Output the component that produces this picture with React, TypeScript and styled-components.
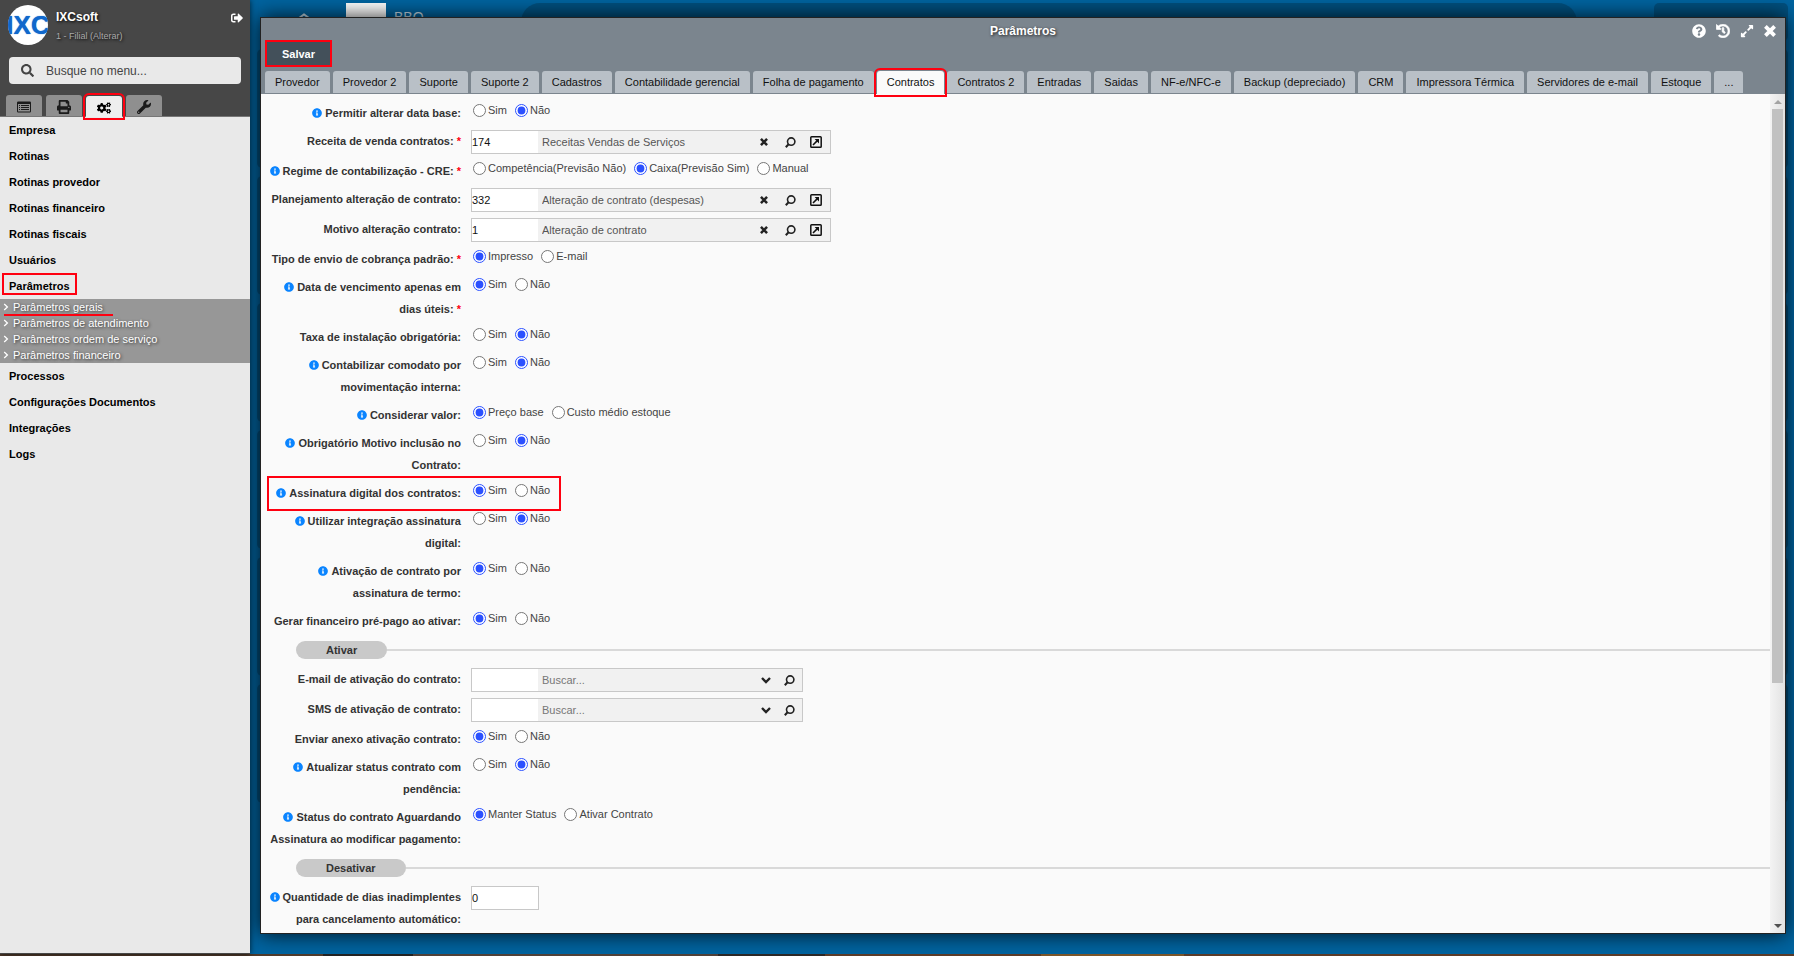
import React from "react";
import styled, { createGlobalStyle, css } from "styled-components";
import {
  FaCogs,
  FaExpandAlt,
  FaHistory,
  FaInfoCircle,
  FaPrint,
  FaQuestionCircle,
  FaSearch,
  FaSignOutAlt,
  FaWrench,
} from "react-icons/fa";

const GlobalStyle = createGlobalStyle`
  *, *::before, *::after { box-sizing: border-box; }
  body {
    margin: 0;
    font: 11px "Liberation Sans", Arial, sans-serif;
    color: #333;
    overflow: hidden;
  }
  button, input { font: inherit; color: inherit; }
  button { border: 0; padding: 0; background: none; cursor: pointer; }
  a { color: inherit; text-decoration: none; }
  ul { list-style: none; margin: 0; padding: 0; }
`;

const highlight = css`
  outline: 2px solid #ff0010;
  outline-offset: 1px;
  z-index: 2;
`;

const Page = styled.div`
  display: grid;
  grid-template: minmax(0, 1fr) 2px / 250px minmax(0, 1fr);
  height: 100vh;
`;

const Dock = styled.div`
  grid-column: 1 / -1;
  background: linear-gradient(90deg, #4f3a2b 0 18%, #222 18% 23%, #4f4038 23% 40%, #2c2725 40% 46%, #5b3b28 46% 58%, #7a5529 58% 66%, #5b3b28 66%);
`;

/* ---------- sidebar ---------- */

const Sidebar = styled.aside`
  display: flex;
  flex-direction: column;
  background: #e9e9e9;
  border-bottom: 1px solid #474747;
  box-shadow: 0 0 6px rgba(0, 0, 0, 0.7);
  z-index: 1;
`;

const SideHeader = styled.header`
  background: #474747;
  border-bottom: 1px solid #777;
`;

const Account = styled.div`
  display: flex;
  gap: 8px;
  height: 57px;
  padding: 5px 7px 0 8px;
  color: #fff;
  text-shadow: 1px 1px 3px #000;
`;

const Logo = styled.div`
  display: flex;
  align-items: center;
  justify-content: center;
  width: 40px;
  height: 40px;
  overflow: hidden;
  border-radius: 50%;
  background: #fff;
  color: #1068cc;
  font-size: 26px;
  font-weight: bold;
  text-shadow: 0 0 1px #1068cc;
`;

const AccountText = styled.div`
  flex: 1;
  padding-top: 5px;
`;

const AccountName = styled.div`
  font-size: 12px;
  line-height: 14px;
  font-weight: bold;
`;

const Branch = styled.a`
  display: block;
  margin-top: 7px;
  font-size: 9px;
  line-height: 10px;
  color: #aaa;
`;

const LogoutButton = styled.button`
  align-self: flex-start;
  margin-top: 7px;
  font-size: 12px;
  line-height: 1;
`;

const SearchBox = styled.label`
  display: flex;
  align-items: center;
  gap: 12px;
  height: 27px;
  margin: 0 9px 11px;
  padding: 0 12px;
  border-radius: 4px;
  background: #e9e9e9;
  color: #444;
  font-size: 13px;
`;

const SearchInput = styled.input`
  flex: 1;
  min-width: 0;
  padding: 0;
  border: 0;
  outline: 0;
  background: none;
  font-size: 12px;
  &::placeholder { color: #444; opacity: 1; }
`;

const SideTabs = styled.div`
  display: flex;
  gap: 4px;
  height: 21px;
  padding-left: 6px;
`;

const SideTab = styled.button<{ $active?: boolean }>`
  display: flex;
  align-items: center;
  justify-content: center;
  width: 36px;
  height: 21px;
  padding-top: 2px;
  border-radius: 3px 3px 0 0;
  background: #8f8f8f;
  color: #1b1b1b;
  font-size: 14px;
  ${(p) => p.$active && css`
    margin-top: 1px;
    background: #eee;
    color: #000;
    ${highlight}
  `}
`;

const MenuItem = styled.li`
  height: 26px;
  padding-left: 2px;
`;

const MenuLink = styled.a<{ $marked?: boolean }>`
  display: inline-block;
  padding: 4px 5px 0;
  border: 2px solid ${(p) => (p.$marked ? "#ff0010" : "transparent")};
  line-height: 14px;
  font-weight: bold;
  color: #000;
`;

const SubMenu = styled.ul`
  background: #979797;
  color: #fff;
  text-shadow: 1px 1px 3px #333;
`;

const SubLink = styled.a<{ $marked?: boolean }>`
  position: relative;
  display: flex;
  align-items: center;
  gap: 4px;
  height: 16px;
  padding-left: 3px;
  ${(p) => p.$marked && css`
    &::after {
      content: "";
      position: absolute;
      left: 4px;
      bottom: -1px;
      width: 109px;
      height: 2px;
      background: #ff0010;
    }
  `}
`;

/* ---------- desktop ---------- */

const Desktop = styled.main`
  position: relative;
  background: #0064a0;
  overflow: hidden;
`;

const Backdrop = styled.div`
  display: flex;
  flex-direction: column;
  gap: 8px;
  padding: 3px 6px 0 7px;
`;

const BackdropBar = styled.div`
  display: flex;
  height: 38px;
  padding-left: 41px;
  color: rgba(255, 255, 255, 0.8);
`;

const BackdropArrow = styled.div`
  width: 48px;
  padding-top: 10px;
`;

const BackdropPicture = styled.div`
  width: 40px;
  height: 40px;
  background: #fff;
`;

const BackdropName = styled.div`
  width: 135px;
  padding: 6px 0 0 8px;
  font-size: 14px;
  line-height: 16px;
`;

const BackdropSearch = styled.div`
  flex: 1;
  margin-right: 77px;
  border-radius: 19px;
  background: #00507f;
`;

const BackdropUser = styled.div`
  width: 134px;
  border-radius: 5px;
  background: #00507f;
`;

const BackdropCard = styled.div`
  height: 119px;
  border-radius: 5px;
  background: #00507f;
`;

/* ---------- window ---------- */

const Window = styled.section`
  position: absolute;
  inset: 17px 8px 20px 10px;
  display: flex;
  flex-direction: column;
  border: 1px solid #222;
  background: #fafafa;
  box-shadow: 0 0 20px rgba(0, 0, 0, 0.85);
`;

const WindowHeader = styled.header`
  background: #7b858e;
`;

const TitleBar = styled.div`
  display: grid;
  grid-template-columns: 1fr auto 1fr;
  height: 22px;
  color: #fff;
`;

const Title = styled.h1`
  grid-column: 2;
  margin: 0;
  padding-top: 6px;
  font-size: 12px;
  line-height: 14px;
  text-shadow: 1px 1px 3px #222;
`;

const TitleActions = styled.div`
  display: flex;
  align-items: flex-start;
  justify-content: flex-end;
  gap: 10px;
  padding: 6px 9px 0 0;
`;

const TitleButton = styled.button`
  display: flex;
  align-items: center;
  height: 14px;
  font-size: 14px;
`;

const SaveButton = styled.button`
  display: block;
  width: 67px;
  height: 27px;
  margin: 0 4px 4px;
  border: 2px solid #ff0010;
  background: #43505a;
  color: #fff;
  font-weight: bold;
`;

const Tabs = styled.div`
  display: flex;
  gap: 3px;
  height: 23px;
  padding-left: 4px;
`;

const Tab = styled.button<{ $active?: boolean }>`
  height: 22px;
  padding: 0 10px;
  border-radius: 3px 3px 0 0;
  background: #b9c0c7;
  color: #111;
  white-space: nowrap;
  ${(p) => p.$active && css`
    height: 23px;
    padding-bottom: 1px;
    background: #fafafa;
    ${highlight}
  `}
`;

const WindowBody = styled.div`
  display: flex;
  flex: 1;
  min-height: 0;
`;

const Form = styled.form`
  flex: 1;
  overflow: hidden;
  padding: 8px 0 0 5px;
`;

const Row = styled.div<{ $marked?: boolean }>`
  position: relative;
  display: grid;
  grid-template-columns: 195px minmax(0, 1fr);
  column-gap: 10px;
  min-height: 28px;
  padding-bottom: 6px;
  ${(p) => p.$marked && css`
    &::after {
      content: "";
      position: absolute;
      inset: -6px auto -1px 1px;
      width: 294px;
      border: 2px solid #ff0010;
      pointer-events: none;
    }
  `}
`;

const Label = styled.label`
  font-weight: bold;
  line-height: 22px;
  text-align: right;
`;

const Info = styled(FaInfoCircle)`
  margin-right: 3px;
  vertical-align: -1px;
  font-size: 10px;
  color: #0a84ff;
`;

const Required = styled.span`
  color: #ff0010;
`;

const Options = styled.div`
  display: flex;
  align-items: flex-start;
  gap: 8px;
  padding: 2px 0 0 2px;
`;

const Option = styled.label`
  display: flex;
  align-items: center;
  gap: 2px;
  line-height: 13px;
  color: #444;
`;

const Radio = styled.input`
  width: 13px;
  height: 13px;
  margin: 0;
  accent-color: #2b50ff;
`;

const Lookup = styled.div<{ $wide?: boolean }>`
  display: flex;
  width: ${(p) => (p.$wide ? 360 : 332)}px;
  height: 24px;
  padding-right: ${(p) => (p.$wide ? 1 : 0)}px;
  border: 1px solid #c8c8c8;
  background: #f1f1f1;
`;

const CodeInput = styled.input`
  width: 66px;
  padding: 0;
  border: 0;
  outline: 0;
  background: #fff;
  color: #111;
`;

const NameInput = styled.input`
  flex: 1;
  min-width: 0;
  padding: 0 4px;
  border: 0;
  outline: 0;
  background: none;
  color: #555;
  &::placeholder { color: #777; opacity: 1; }
`;

const LookupButton = styled.button<{ $narrow?: boolean }>`
  display: flex;
  align-items: center;
  justify-content: center;
  width: ${(p) => (p.$narrow ? 20 : 26)}px;
  color: #222;
`;

const NumberInput = styled.input`
  width: 68px;
  height: 24px;
  padding: 0;
  border: 1px solid #c8c8c8;
  background: #fff;
  color: #111;
`;

const Section = styled.div`
  display: flex;
  align-items: center;
  margin: 3px 0 9px 30px;
  &::after {
    content: "";
    flex: 1;
    height: 2px;
    background: #d9d9d9;
  }
`;

const SectionName = styled.h2`
  margin: 0;
  padding: 0 30px;
  border-radius: 9px;
  background: #c9c9c9;
  font-size: 11px;
  line-height: 18px;
`;

const ScrollBar = styled.div`
  display: flex;
  flex-direction: column;
  align-items: center;
  width: 15px;
  background: linear-gradient(90deg, #f3f3f3, #e2e2e2);
`;

const ScrollTrack = styled.div`
  flex: 1;
  width: 11px;
`;

const ScrollThumb = styled.div`
  height: 71%;
  background: #c1c1c1;
`;

const ScrollArrow = styled.button<{ $down?: boolean }>`
  display: flex;
  align-items: center;
  justify-content: center;
  height: 15px;
  &::before {
    content: "";
    border: 4px solid transparent;
    ${(p) => (p.$down ? "border-top-color: #505050; border-bottom: 0;" : "border-bottom-color: #a3a3a3; border-top: 0;")}
  }
`;

const MagnifierIcon = () => (
  <svg width="11" height="11" viewBox="0 0 11 11" fill="none" stroke="#222" aria-hidden="true">
    <circle cx="6.2" cy="4.6" r="3.7" strokeWidth="1.6" />
    <path d="M3.6 7.2L0.8 10.2" strokeWidth="2" />
  </svg>
);

const OpenIcon = () => (
  <svg width="12" height="12" viewBox="0 0 12 12" fill="none" stroke="#111" aria-hidden="true">
    <rect x="0.8" y="0.8" width="10.4" height="10.4" rx="0.8" strokeWidth="1.5" />
    <path d="M3 9L7.6 4.4" strokeWidth="1.6" />
    <path d="M4.6 3H9V7.4Z" fill="#111" stroke="none" />
  </svg>
);

const CrossIcon = ({ size }: { size: number }) => (
  <svg width={size} height={size} viewBox="0 0 12 12" fill="none" stroke="currentColor" strokeWidth="3.8" aria-hidden="true">
    <path d="M1.4 1.4L10.6 10.6M10.6 1.4L1.4 10.6" />
  </svg>
);

const ChevronDownIcon = () => (
  <svg width="10" height="8" viewBox="0 0 10 8" fill="none" stroke="currentColor" strokeWidth="2.4" aria-hidden="true">
    <path d="M1 2L5 6L9 2" />
  </svg>
);

const ChevronRightIcon = () => (
  <svg width="6" height="8" viewBox="0 0 6 8" fill="none" stroke="currentColor" strokeWidth="1.3" aria-hidden="true">
    <path d="M1.2 1L4.4 4L1.2 7" />
  </svg>
);

const ListIcon = () => (
  <svg width="14" height="12" viewBox="0 0 14 12" fill="currentColor" aria-hidden="true">
    <path fillRule="evenodd" d="M1.2 0.5H12.8Q14 0.5 14 1.7V10.3Q14 11.5 12.8 11.5H1.2Q0 11.5 0 10.3V1.7Q0 0.5 1.2 0.5ZM1 3V10.5H13V3Z" />
    <path d="M2 4H3V5H2ZM4 4H12V5H4ZM2 6H3V7H2ZM4 6H12V7H4ZM2 8H3V9H2ZM4 8H12V9H4Z" />
  </svg>
);

const PointerIcon = () => (
  <svg width="12" height="12" viewBox="0 0 12 12" fill="none" stroke="currentColor" strokeWidth="2" aria-hidden="true">
    <path d="M1 5L6 1.5L11 5" />
  </svg>
);

type Field = {
  id: string;
  label: string;
  info?: boolean;
  required?: boolean;
  marked?: boolean;
  options?: string[];
  selected?: number;
  code?: string;
  name?: string;
  search?: boolean;
  value?: string;
};

const yesNo = ["Sim", "Não"];

const contractFields: Field[] = [
  { id: "data-base", label: "Permitir alterar data base:", info: true, options: yesNo, selected: 1 },
  { id: "receita", label: "Receita de venda contratos:", required: true, code: "174", name: "Receitas Vendas de Serviços" },
  { id: "regime", label: "Regime de contabilização - CRE:", info: true, required: true, options: ["Competência(Previsão Não)", "Caixa(Previsão Sim)", "Manual"], selected: 1 },
  { id: "planejamento", label: "Planejamento alteração de contrato:", code: "332", name: "Alteração de contrato (despesas)" },
  { id: "motivo", label: "Motivo alteração contrato:", code: "1", name: "Alteração de contrato" },
  { id: "envio", label: "Tipo de envio de cobrança padrão:", required: true, options: ["Impresso", "E-mail"], selected: 0 },
  { id: "vencimento", label: "Data de vencimento apenas em dias úteis:", info: true, required: true, options: yesNo, selected: 0 },
  { id: "taxa", label: "Taxa de instalação obrigatória:", options: yesNo, selected: 1 },
  { id: "comodato", label: "Contabilizar comodato por movimentação interna:", info: true, options: yesNo, selected: 1 },
  { id: "valor", label: "Considerar valor:", info: true, options: ["Preço base", "Custo médio estoque"], selected: 0 },
  { id: "inclusao", label: "Obrigatório Motivo inclusão no Contrato:", info: true, options: yesNo, selected: 1 },
  { id: "assinatura", label: "Assinatura digital dos contratos:", info: true, marked: true, options: yesNo, selected: 0 },
  { id: "integracao", label: "Utilizar integração assinatura digital:", info: true, options: yesNo, selected: 1 },
  { id: "termo", label: "Ativação de contrato por assinatura de termo:", info: true, options: yesNo, selected: 0 },
  { id: "prepago", label: "Gerar financeiro pré-pago ao ativar:", options: yesNo, selected: 0 },
];

const activateFields: Field[] = [
  { id: "email", label: "E-mail de ativação do contrato:", search: true },
  { id: "sms", label: "SMS de ativação de contrato:", search: true },
  { id: "anexo", label: "Enviar anexo ativação contrato:", options: yesNo, selected: 0 },
  { id: "pendencia", label: "Atualizar status contrato com pendência:", info: true, options: yesNo, selected: 1 },
  { id: "aguardando", label: "Status do contrato Aguardando Assinatura ao modificar pagamento:", info: true, options: ["Manter Status", "Ativar Contrato"], selected: 0 },
];

const deactivateFields: Field[] = [
  { id: "inadimplentes", label: "Quantidade de dias inadimplentes para cancelamento automático:", info: true, value: "0" },
];

const FieldControl = ({ field }: { field: Field }) => {
  if (field.options) {
    return (
      <Options role="radiogroup" aria-labelledby={`${field.id}-label`}>
        {field.options.map((text, i) => (
          <Option key={text}>
            <Radio type="radio" name={field.id} defaultChecked={i === field.selected} />
            {text}
          </Option>
        ))}
      </Options>
    );
  }
  if (field.value !== undefined) {
    return <div><NumberInput id={field.id} defaultValue={field.value} /></div>;
  }
  return (
    <Lookup $wide={!field.search}>
      <CodeInput id={field.id} defaultValue={field.code} />
      <NameInput
        aria-labelledby={`${field.id}-label`}
        defaultValue={field.name}
        placeholder={field.search ? "Buscar..." : undefined}
      />
      <LookupButton type="button" $narrow={field.search} aria-label={field.search ? "Abrir lista" : "Limpar"}>
        {field.search ? <ChevronDownIcon /> : <CrossIcon size={8} />}
      </LookupButton>
      <LookupButton type="button" aria-label="Pesquisar"><MagnifierIcon /></LookupButton>
      {!field.search && <LookupButton type="button" aria-label="Abrir cadastro"><OpenIcon /></LookupButton>}
    </Lookup>
  );
};

const Fields = ({ items }: { items: Field[] }) => (
  <>
    {items.map((field) => (
      <Row key={field.id} $marked={field.marked}>
        <Label
          as={field.options ? "span" : "label"}
          id={`${field.id}-label`}
          htmlFor={field.options ? undefined : field.id}
        >
          {field.info && <Info />}
          {field.label}
          {field.required && <Required> *</Required>}
        </Label>
        <FieldControl field={field} />
      </Row>
    ))}
  </>
);

const menu: { text: string; marked?: boolean; children?: string[] }[] = [
  { text: "Empresa" },
  { text: "Rotinas" },
  { text: "Rotinas provedor" },
  { text: "Rotinas financeiro" },
  { text: "Rotinas fiscais" },
  { text: "Usuários" },
  {
    text: "Parâmetros",
    marked: true,
    children: ["Parâmetros gerais", "Parâmetros de atendimento", "Parâmetros ordem de serviço", "Parâmetros financeiro"],
  },
  { text: "Processos" },
  { text: "Configurações Documentos" },
  { text: "Integrações" },
  { text: "Logs" },
];

const tabs = [
  "Provedor", "Provedor 2", "Suporte", "Suporte 2", "Cadastros", "Contabilidade gerencial",
  "Folha de pagamento", "Contratos", "Contratos 2", "Entradas", "Saidas", "NF-e/NFC-e",
  "Backup (depreciado)", "CRM", "Impressora Térmica", "Servidores de e-mail", "Estoque", "...",
];

export default function App() {
  return (
    <>
      <GlobalStyle />
      <Page>
        <Sidebar>
          <SideHeader>
            <Account>
              <Logo>IXC</Logo>
              <AccountText>
                <AccountName>IXCsoft</AccountName>
                <Branch href="#">1 - Filial (Alterar)</Branch>
              </AccountText>
              <LogoutButton aria-label="Sair"><FaSignOutAlt /></LogoutButton>
            </Account>
            <SearchBox>
              <FaSearch />
              <SearchInput placeholder="Busque no menu..." aria-label="Busque no menu" />
            </SearchBox>
            <SideTabs>
              <SideTab aria-label="Cadastros"><ListIcon /></SideTab>
              <SideTab aria-label="Relatórios"><FaPrint /></SideTab>
              <SideTab $active aria-label="Configurações"><FaCogs /></SideTab>
              <SideTab aria-label="Ferramentas"><FaWrench /></SideTab>
            </SideTabs>
          </SideHeader>
          <nav>
            <ul>
              {menu.map((item) => (
                <React.Fragment key={item.text}>
                  <MenuItem><MenuLink href="#" $marked={item.marked}>{item.text}</MenuLink></MenuItem>
                  {item.children && (
                    <li>
                      <SubMenu>
                        {item.children.map((text, i) => (
                          <li key={text}>
                            <SubLink href="#" $marked={i === 0}><ChevronRightIcon />{text}</SubLink>
                          </li>
                        ))}
                      </SubMenu>
                    </li>
                  )}
                </React.Fragment>
              ))}
            </ul>
          </nav>
        </Sidebar>

        <Desktop>
          <Backdrop aria-hidden="true">
            <BackdropBar>
              <BackdropArrow><PointerIcon /></BackdropArrow>
              <BackdropPicture />
              <BackdropName>BBO —</BackdropName>
              <BackdropSearch />
              <BackdropUser />
            </BackdropBar>
            {[0, 1, 2, 3, 4, 5].map((n) => <BackdropCard key={n} />)}
          </Backdrop>

          <Window aria-label="Parâmetros">
            <WindowHeader>
              <TitleBar>
                <Title>Parâmetros</Title>
                <TitleActions>
                  <TitleButton aria-label="Ajuda"><FaQuestionCircle /></TitleButton>
                  <TitleButton aria-label="Histórico"><FaHistory stroke="currentColor" strokeWidth={24} /></TitleButton>
                  <TitleButton aria-label="Expandir"><FaExpandAlt /></TitleButton>
                  <TitleButton aria-label="Fechar"><CrossIcon size={12} /></TitleButton>
                </TitleActions>
              </TitleBar>
              <SaveButton>Salvar</SaveButton>
              <Tabs role="tablist">
                {tabs.map((text) => (
                  <Tab key={text} role="tab" aria-selected={text === "Contratos"} $active={text === "Contratos"}>{text}</Tab>
                ))}
              </Tabs>
            </WindowHeader>
            <WindowBody>
              <Form>
                <Fields items={contractFields} />
                <Section><SectionName>Ativar</SectionName></Section>
                <Fields items={activateFields} />
                <Section><SectionName>Desativar</SectionName></Section>
                <Fields items={deactivateFields} />
              </Form>
              <ScrollBar>
                <ScrollArrow aria-label="Rolar para cima" />
                <ScrollTrack><ScrollThumb /></ScrollTrack>
                <ScrollArrow $down aria-label="Rolar para baixo" />
              </ScrollBar>
            </WindowBody>
          </Window>
        </Desktop>
        <Dock />
      </Page>
    </>
  );
}
